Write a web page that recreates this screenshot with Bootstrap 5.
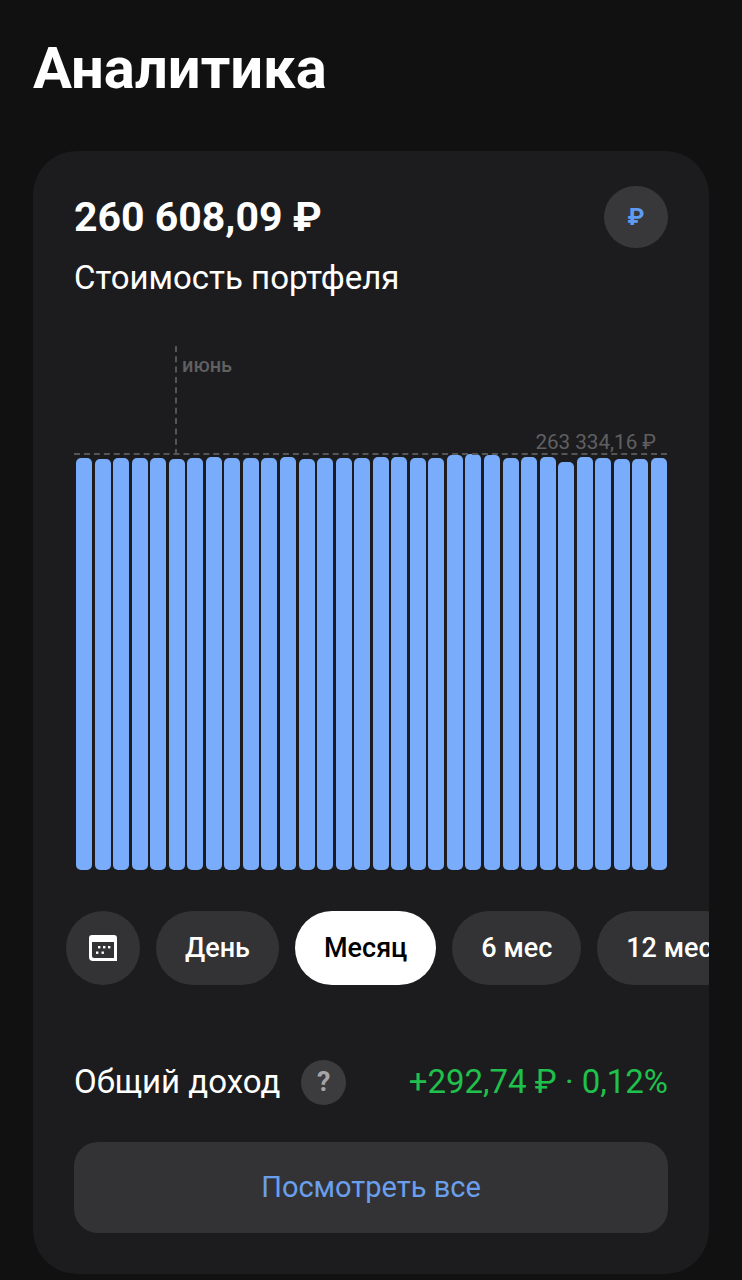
<!DOCTYPE html>
<html lang="ru">
<head>
    <meta charset="UTF-8">
    <meta name="viewport" content="width=device-width, initial-scale=1.0">
    <title>Аналитика</title>
    <link href="https://cdn.jsdelivr.net/npm/bootstrap@5.3.0/dist/css/bootstrap.min.css" rel="stylesheet">
    <style>
        body {
            background-color: #111112;
            font-family: Roboto, "Liberation Sans", sans-serif;
            color: #fff;
            height: 1280px;
            overflow: hidden;
        }
        .page-title {
            font-size: 58px;
            font-weight: 700;
            line-height: 66px;
            padding: 35px 0 0 33px;
            margin: 0;
        }
        .panel {
            margin: 50px 33px 0;
            height: 1123px;
            background-color: #1c1c1e;
            border-radius: 44px;
            overflow: hidden;
        }
        .head-row {
            padding: 35px 41px 0;
        }
        .total {
            font-size: 41px;
            font-weight: 700;
            line-height: 62px;
        }
        .subtitle {
            font-size: 33px;
            line-height: 40px;
            margin-top: 10px;
        }
        .cur-circle {
            width: 64px;
            height: 62px;
            background-color: #38383b;
            color: #5f9bf0;
            font-size: 24px;
            font-weight: 700;
        }
        .chart {
            height: 524px;
            margin: 48px 42px 0 43px;
        }
        .month-line {
            left: 99px;
            top: 0;
            height: 109px;
            border-left: 2px dashed #555;
        }
        .month-label {
            left: 106px;
            top: 7px;
            font-size: 20px;
            font-weight: 500;
            line-height: 24px;
            color: #606062;
        }
        .max-line {
            left: -2px;
            right: 0;
            top: 107px;
            border-top: 2px dashed #555;
        }
        .max-label {
            right: 11px;
            top: 84px;
            font-size: 20.6px;
            line-height: 24px;
            color: #606062;
        }
        .bars {
            height: 524px;
        }
        .bar {
            width: 16px;
            background-color: #79adfb;
            border-radius: 5px;
        }
        .periods {
            padding: 41px 0 0 33px;
            gap: 16px;
        }
        .period {
            height: 74px;
            padding: 0 29px;
            border-radius: 37px;
            background-color: #333335;
            font-size: 27px;
            font-weight: 500;
            color: #fff;
            flex-shrink: 0;
        }
        .period.active {
            background-color: #fff;
            color: #000;
        }
        .period-icon {
            width: 74px;
            padding: 0;
        }
        .income-row {
            padding: 74px 41px 0;
            height: 157px;
        }
        .income-label {
            font-size: 33px;
            line-height: 46px;
        }
        .help-circle {
            width: 45px;
            height: 45px;
            background-color: #3c3c3f;
            color: #a5a5a8;
            font-size: 27px;
            font-weight: 700;
            margin-left: 21px;
        }
        .income-value {
            font-size: 33px;
            color: #1fc14c;
            line-height: 46px;
        }
        .see-all {
            display: block;
            margin: 0 41px;
            width: calc(100% - 82px);
            height: 91px;
            border: 0;
            border-radius: 24px;
            background-color: #333335;
            color: #6a9fee;
            font-size: 29px;
        }
    </style>
</head>
<body>
    <h1 class="page-title">Аналитика</h1>

    <div class="panel">
        <div class="head-row d-flex justify-content-between align-items-start">
            <div>
                <div class="total">260 608,09 ₽</div>
                <div class="subtitle">Стоимость портфеля</div>
            </div>
            <div class="cur-circle rounded-circle d-flex align-items-center justify-content-center">₽</div>
        </div>

        <div class="chart position-relative">
            <div class="month-line position-absolute"></div>
            <div class="month-label position-absolute">июнь</div>
            <div class="max-line position-absolute"></div>
            <div class="max-label position-absolute">263 334,16 ₽</div>
            <div class="bars d-flex justify-content-between align-items-end" id="bars"></div>
        </div>

        <div class="periods d-flex">
            <div class="period period-icon rounded-circle d-flex align-items-center justify-content-center">
                <svg width="28" height="26" viewBox="0 0 28 26">
                    <path fill="#fff" d="M3 0h22a3 3 0 0 1 3 3v23H4a4 4 0 0 1-4-4V3a3 3 0 0 1 3-3z"/>
                    <path fill="#333335" d="M3 7h22v16H5a2 2 0 0 1-2-2z"/>
                    <g fill="#fff">
                        <rect x="9" y="11" width="2.4" height="2.4"/>
                        <rect x="14" y="11" width="2.4" height="2.4"/>
                        <rect x="19" y="11" width="2.4" height="2.4"/>
                        <rect x="7" y="16.5" width="2.4" height="2.4"/>
                        <rect x="12.5" y="16.5" width="2.4" height="2.4"/>
                    </g>
                </svg>
            </div>
            <div class="period d-flex align-items-center">День</div>
            <div class="period active d-flex align-items-center">Месяц</div>
            <div class="period d-flex align-items-center">6 мес</div>
            <div class="period d-flex align-items-center">12 мес</div>
        </div>

        <div class="income-row d-flex justify-content-between align-items-start">
            <div class="d-flex align-items-center">
                <span class="income-label">Общий доход</span>
                <span class="help-circle rounded-circle d-flex align-items-center justify-content-center">?</span>
            </div>
            <span class="income-value">+292,74 ₽ · 0,12%</span>
        </div>

        <button class="see-all" type="button">Посмотреть все</button>
    </div>

    <script>
        // bar tops measured off the picture, chart bottom is y=870
        const tops = [458,459,458,458,458,459,458,457,458,458,458,457,459,458,458,458,457,457,458,458,455,454,455,458,457,457,462,457,458,459,459,458];
        const bars = document.getElementById('bars');
        tops.forEach(t => {
            const b = document.createElement('div');
            b.className = 'bar';
            b.style.height = (870 - t) + 'px';
            bars.appendChild(b);
        });
    </script>
    <script src="https://cdn.jsdelivr.net/npm/bootstrap@5.3.0/dist/js/bootstrap.bundle.min.js"></script>
</body>
</html>
